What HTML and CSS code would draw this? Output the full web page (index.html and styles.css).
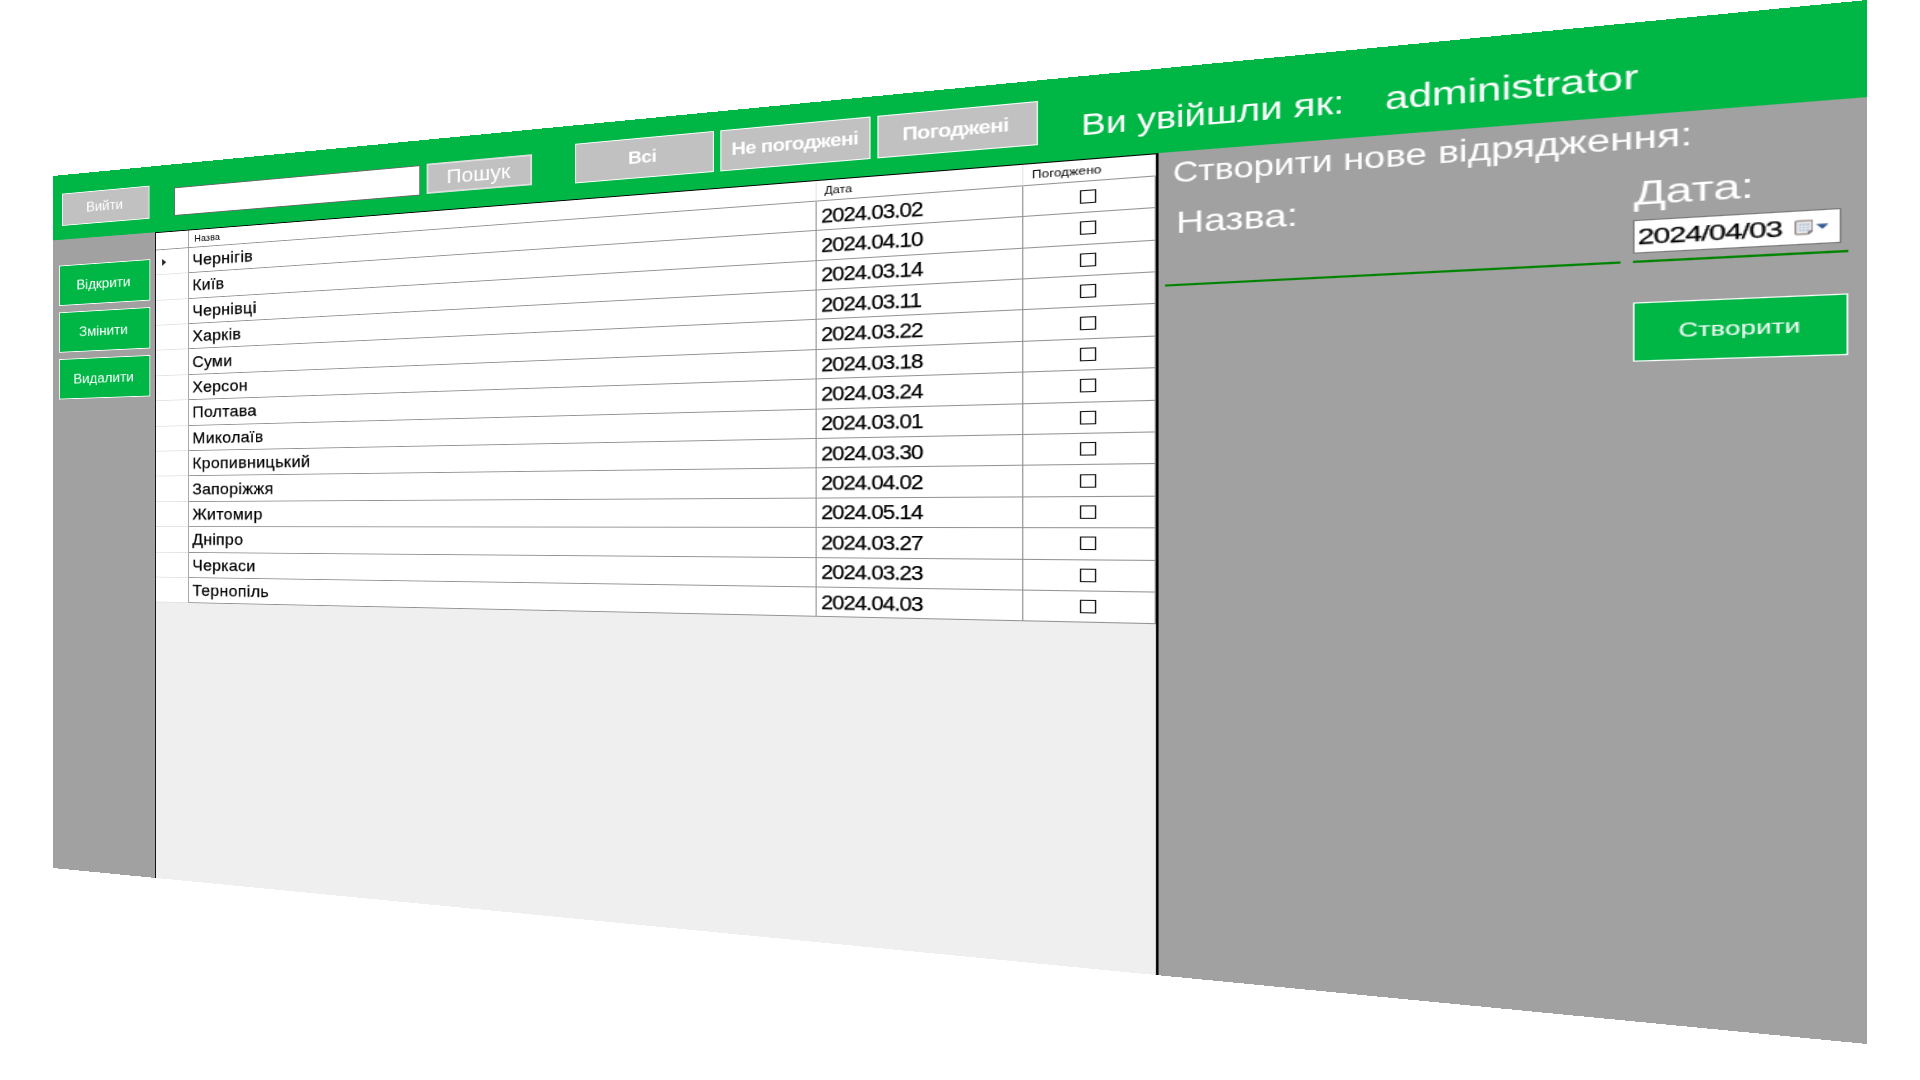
FILE: index.html
```
<!DOCTYPE html>
<html lang="uk">
<head>
<meta charset="utf-8">
<title>Відрядження</title>
<link rel="stylesheet" href="styles.css">
</head>
<body>
<div class="window">
  <header class="topbar">
    <button class="btn btn-exit">Вийти</button>
    <input class="search" type="text">
    <button class="btn btn-search">Пошук</button>
    <div class="filters">
      <button class="btn btn-filter">Всі</button>
      <button class="btn btn-filter pending">Не погоджені</button>
      <button class="btn btn-filter">Погоджені</button>
    </div>
    <span class="login-label">Ви увійшли як:</span>
    <span class="login-user">administrator</span>
  </header>
  <main class="content">
    <nav class="sidebar">
      <button class="btn action">Відкрити</button>
      <button class="btn action">Змінити</button>
      <button class="btn action">Видалити</button>
    </nav>
    <section class="grid">
      <div class="row head"><span></span><span>Назва</span><span>Дата</span><span>Погоджено</span></div>
      <div class="row"><span class="mark"><i class="pointer"></i></span><span class="name">Чернігів</span><span class="date">2024.03.02</span><span class="check"><i class="box"></i></span></div>
      <div class="row"><span class="mark"></span><span class="name">Київ</span><span class="date">2024.04.10</span><span class="check"><i class="box"></i></span></div>
      <div class="row"><span class="mark"></span><span class="name">Чернівці</span><span class="date">2024.03.14</span><span class="check"><i class="box"></i></span></div>
      <div class="row"><span class="mark"></span><span class="name">Харків</span><span class="date">2024.03.11</span><span class="check"><i class="box"></i></span></div>
      <div class="row"><span class="mark"></span><span class="name">Суми</span><span class="date">2024.03.22</span><span class="check"><i class="box"></i></span></div>
      <div class="row"><span class="mark"></span><span class="name">Херсон</span><span class="date">2024.03.18</span><span class="check"><i class="box"></i></span></div>
      <div class="row"><span class="mark"></span><span class="name">Полтава</span><span class="date">2024.03.24</span><span class="check"><i class="box"></i></span></div>
      <div class="row"><span class="mark"></span><span class="name">Миколаїв</span><span class="date">2024.03.01</span><span class="check"><i class="box"></i></span></div>
      <div class="row"><span class="mark"></span><span class="name">Кропивницький</span><span class="date">2024.03.30</span><span class="check"><i class="box"></i></span></div>
      <div class="row"><span class="mark"></span><span class="name">Запоріжжя</span><span class="date">2024.04.02</span><span class="check"><i class="box"></i></span></div>
      <div class="row"><span class="mark"></span><span class="name">Житомир</span><span class="date">2024.05.14</span><span class="check"><i class="box"></i></span></div>
      <div class="row"><span class="mark"></span><span class="name">Дніпро</span><span class="date">2024.03.27</span><span class="check"><i class="box"></i></span></div>
      <div class="row"><span class="mark"></span><span class="name">Черкаси</span><span class="date">2024.03.23</span><span class="check"><i class="box"></i></span></div>
      <div class="row"><span class="mark"></span><span class="name">Тернопіль</span><span class="date">2024.04.03</span><span class="check"><i class="box"></i></span></div>
    </section>
    <section class="create">
      <h2 class="create-title">Створити нове відрядження:</h2>
      <div class="fields">
        <div class="field">
          <label class="field-label">Назва:</label>
        </div>
        <div class="field">
          <label class="field-label field-label-date">Дата:</label>
          <div class="picker">
            <span class="picker-value">2024/04/03</span>
            <svg class="calendar" viewBox="0 0 12 13">
              <path d="M1.5.7h9q.8 0 .8.8v8L8.800 12.300H1.500q-.8 0-.8-.8v-10q0-.8.8-.8z" fill="#f0eeee" stroke="#7d6f6c" stroke-width="1"/>
              <path d="M2.700 3h6.800v6.800H2.700z" fill="#b9c6d8"/>
              <path d="M2.700 5.200h6.800M2.700 7.500h6.800M5 3v6.800M7.200 3v6.800" stroke="#fff" stroke-width=".4"/>
              <path d="M11.300 9.300L8.700 12.300V9.800z" fill="#66585a"/>
            </svg>
            <svg class="arrow" viewBox="0 0 8 5"><path d="M0 0h8L4 4.600z" fill="#34588f"/></svg>
          </div>
        </div>
      </div>
      <button class="btn action btn-create">Створити</button>
    </section>
  </main>
</div>
</body>
</html>
```
FILE: styles.css
```
* { box-sizing: border-box; }

body {
  margin: 0;
  width: 1920px;
  height: 1080px;
  overflow: hidden;
  background: #fff;
  font-family: "Liberation Sans", Arial, sans-serif;
}

/* The window is laid out flat and then tilted in perspective. */
.window {
  width: 1600px;
  height: 860px;
  display: flex;
  flex-direction: column;
  overflow: hidden;
  transform-origin: 0 0;
  transform: matrix3d(0.740325, -0.11, 0, -0.000210725, 0, 0.804651, 0, 0, 0, 0, 1, 0, 53, 176, 0, 1);
  background: #a1a1a1;
}

.topbar {
  flex: none;
  height: 79.5px;
  display: flex;
  align-items: flex-start;
  padding-left: 12px;
  background: #00b746;
  color: #fff;
  white-space: nowrap;
}

.btn {
  margin: 0;
  padding: 0;
  border: 1px solid #fff;
  background: #c1c1c1;
  color: #fff;
  font-family: inherit;
  white-space: nowrap;
}

.btn-exit {
  width: 113px;
  height: 40px;
  margin-top: 22.5px;
  padding-right: 2px;
  font-size: 17px;
}

.search {
  width: 287px;
  height: 34px;
  margin: 27.8px 0 0 30.8px;
  padding: 0 4px;
  border: 1px solid #6a6a6a;
  border-radius: 0;
  background: #fff;
}

.btn-search {
  width: 112px;
  height: 34px;
  margin: 27.3px 0 0 7.7px;
  padding-right: 2px;
  border: 2px solid #dedede;
  font-size: 22.5px;
}

.filters {
  display: flex;
  gap: 6px;
  margin: 19.5px 0 0 43.1px;
}

.btn-filter {
  width: 136.5px;
  height: 43px;
  padding-right: 2px;
  font-size: 18.7px;
  font-weight: bold;
  letter-spacing: -0.55px;
}

.pending { padding-right: 0; }

.login-label,
.login-user {
  font-size: 29.4px;
  line-height: 34px;
  margin-top: 29.5px;
}

.login-label { width: 228.5px; margin-left: 35px; }

.content {
  flex: 1;
  display: grid;
  grid-template-columns: 132px 991px 1fr;
}

.sidebar {
  display: flex;
  flex-direction: column;
  gap: 8px;
  padding: 32.5px 6.3px 0 8.3px;
}

.action {
  height: 50px;
  padding: 1px 2px 0 0;
  background: #00b746;
  font-size: 17.3px;
}

.grid {
  border: solid #000;
  border-width: 1px 2px 0 1px;
  background: #efefef;
}

.row {
  display: grid;
  grid-template-columns: 41px 663px 178px 1fr;
  height: 30.4px;
  background: #fff;
  color: #000;
  font-size: 19.2px;
}

.row > span {
  display: flex;
  align-items: center;
  border-right: 1px solid #929292;
  border-bottom: 1px solid #929292;
}

.row > .mark {
  padding-left: 7.5px;
  border-bottom-color: #e2e2e2;
}

.row > .name,
.row > .date,
.picker-value {
  -webkit-text-stroke: 0.25px #000;
}

.row > .name { padding: 1px 0 0 4.5px; letter-spacing: 0.4px; }
.row > .date { padding: 1px 0 0 4px; font-size: 19.6px; letter-spacing: -0.87px; }
.row > .check { justify-content: center; }

.row.head {
  height: 21.4px;
  font-size: 11.1px;
}

.row.head > span {
  padding-left: 7px;
  border-right-color: #e5e5e5;
}

.row.head > span:first-child { border-right-color: #929292; }

.pointer {
  border: 4.5px solid transparent;
  border-left: 5.5px solid #222;
  border-right: 0;
}

.box {
  width: 13px;
  height: 13px;
  border: 1px solid #111;
}

.create {
  padding: 3px 11px 0 5px;
  color: #fff;
}

.create-title {
  margin: 0 0 0 6px;
  font-size: 27.15px;
  line-height: 33px;
  font-weight: normal;
  white-space: nowrap;
}

.fields {
  display: grid;
  grid-template-columns: 321px 131.5px;
  column-gap: 8.4px;
}

.field {
  height: 91.5px;
  padding-top: 13px;
  border-bottom: 2px solid #008400;
}

.field-label {
  display: block;
  padding-left: 8.5px;
  font-size: 29.7px;
  line-height: 36px;
}

.field-label-date { padding-left: 0; font-size: 30.2px; }

.picker {
  display: flex;
  align-items: center;
  width: 127.5px;
  height: 29px;
  margin-top: 5.5px;
  padding-left: 1.5px;
  border: 1px solid #7a7a7a;
  background: #fff;
  color: #000;
}

.picker-value { width: 97px; font-size: 19.2px; letter-spacing: -0.65px; }
.calendar { width: 11.5px; height: 13px; }
.arrow { width: 7.5px; height: 5px; margin-left: 1.5px; }

.btn-create {
  display: block;
  width: 131.5px;
  height: 51px;
  margin: 34px 0 0 329.4px;
  padding: 0;
  font-size: 17.1px;
}
```
